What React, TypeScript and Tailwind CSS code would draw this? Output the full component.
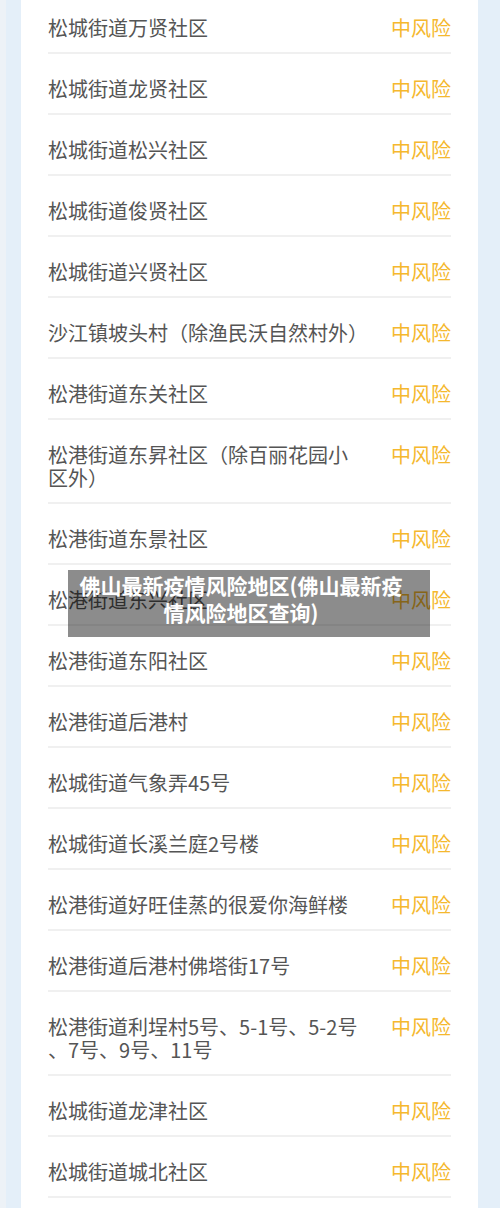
const rows: string[][] = [
  ["松城街道万贤社区"],
  ["松城街道龙贤社区"],
  ["松城街道松兴社区"],
  ["松城街道俊贤社区"],
  ["松城街道兴贤社区"],
  ["沙江镇坡头村（除渔民沃自然村外）"],
  ["松港街道东关社区"],
  ["松港街道东昇社区（除百丽花园小", "区外）"],
  ["松港街道东景社区"],
  ["松港街道东兴社区"],
  ["松港街道东阳社区"],
  ["松港街道后港村"],
  ["松城街道气象弄45号"],
  ["松城街道长溪兰庭2号楼"],
  ["松港街道好旺佳蒸的很爱你海鲜楼"],
  ["松港街道后港村佛塔街17号"],
  ["松港街道利埕村5号、5-1号、5-2号", "、7号、9号、11号"],
  ["松城街道龙津社区"],
  ["松城街道城北社区"],
];

export default function App() {
  return (
    <div
      className="relative h-[1208px] overflow-hidden bg-[#e4eff9] pl-[15px] pr-[22px] border-l-[6px] border-[#edf2f7]"
      style={{ fontFamily: '"Noto Sans CJK SC", "Noto Sans", sans-serif' }}
    >
      <div className="h-full bg-white px-[27px]">
        {rows.map((lines, i) => (
          <div
            key={i}
            className={`flex items-start justify-between border-b-2 border-[#f0f0f0] pb-[13px] ${
              i === 0 ? "pt-[16px]" : "pt-[23px]"
            }`}
          >
            <div className="text-[20px] leading-[23px] text-[#555555] whitespace-nowrap">
              {lines.map((l, j) => (
                <div key={j}>{l}</div>
              ))}
            </div>
            <div className="shrink-0 text-[20px] leading-[23px] text-[#f5b82e]">中风险</div>
          </div>
        ))}
      </div>

      <div className="absolute left-[62px] top-[570px] w-[362px] h-[67px] bg-black/45 pl-[2px] pr-[18px] pt-[2px] text-center text-[21px] font-bold leading-[27px] text-white">
        佛山最新疫情风险地区(佛山最新疫
        <br />
        情风险地区查询)
      </div>
    </div>
  );
}
